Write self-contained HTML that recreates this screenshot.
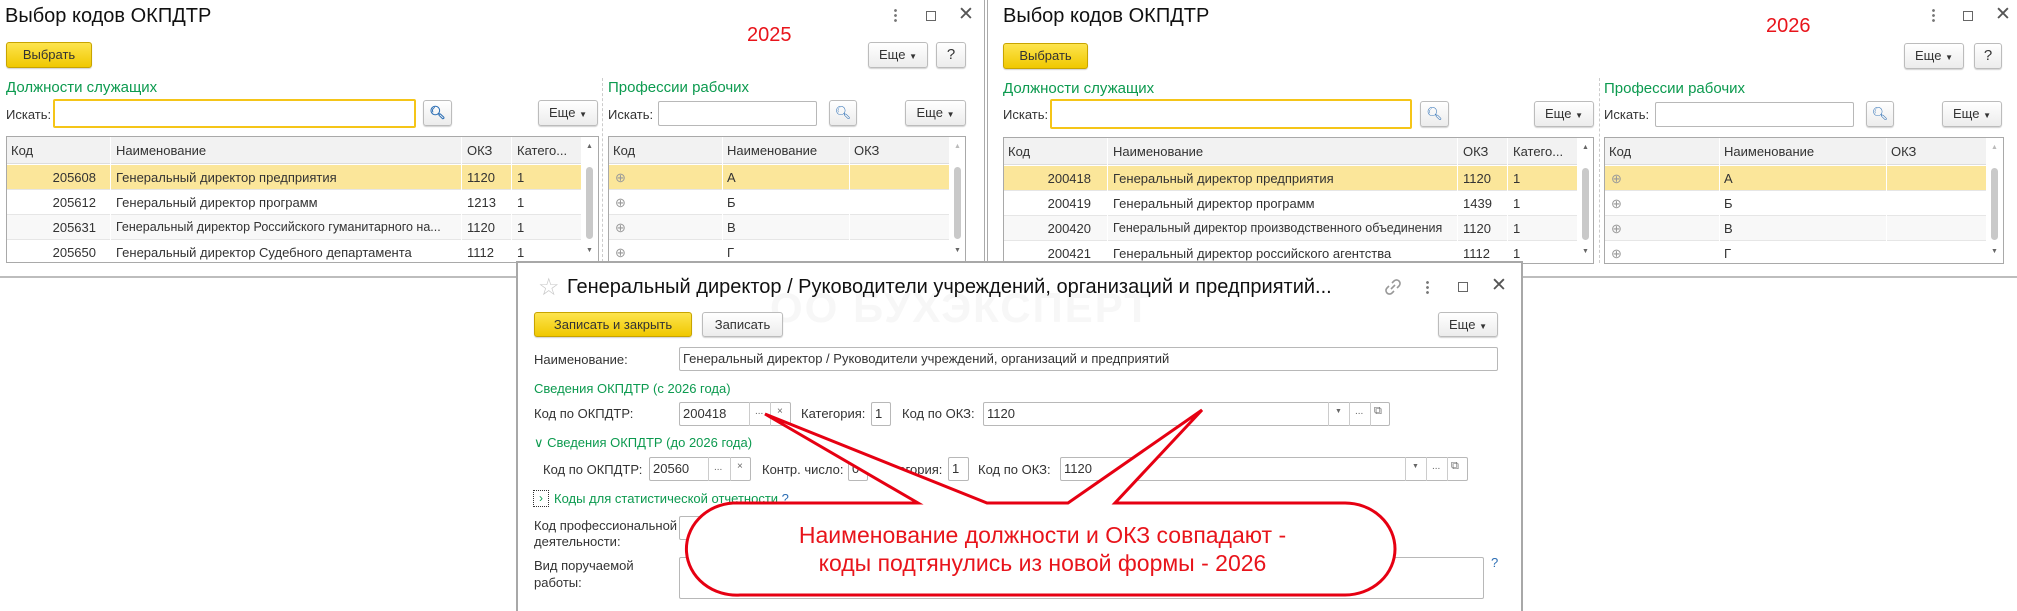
<!DOCTYPE html>
<html><head><meta charset="utf-8">
<style>
*{box-sizing:border-box;margin:0;padding:0}
body{width:2017px;height:607px;overflow:hidden;background:#fff;font-family:"Liberation Sans",Arial,sans-serif;font-size:13px;color:#333;position:relative}
.a{position:absolute;white-space:nowrap}
.ttl{font-size:20px;color:#111}
.grn{color:#0c9a4f;font-size:15px}
.red{color:#e8141b}
.btn{position:absolute;border:1px solid #bcbcbc;border-radius:3px;background:linear-gradient(#fff,#ececec);box-shadow:0 1px 1px rgba(0,0,0,.18);text-align:center;color:#333;font-size:13px}
.ylw{background:linear-gradient(#fde44e,#f0c800);border-color:#c8a400;color:#333}
.inp{position:absolute;border:1px solid #b8b8b8;border-radius:2px;background:#fff;padding-left:3px;font-size:13px;color:#333}
.tbl{position:absolute;border:1px solid #a9a9a9;overflow:hidden;background:#fff}
.hdr{position:absolute;top:0;left:0;right:0;height:27px;background:#f2f2f2;border-bottom:1px solid #ddd}
.row{position:absolute;left:0;height:25px;border-bottom:1px solid #e6e6e6}
.sel{background:#fbe69a}
.c{position:absolute;top:0;line-height:25px}
.vl{position:absolute;top:0;bottom:0;width:1px;background:#fff}
.sb{position:absolute;top:0;bottom:0;width:18px;background:#fff}
.thumb{position:absolute;left:5px;width:7px;background:#c9c9c9;border-radius:4px}
</style></head><body>

<!-- ========== WINDOW 1 ========== -->
<div class="a ttl" style="left:5px;top:5px">Выбор кодов ОКПДТР</div>
<div class="a" style="left:894px;top:8px;width:3px;height:14px;background:radial-gradient(circle,#777 1.2px,transparent 1.6px) 0 0/3px 5px"></div>
<div class="a" style="left:926px;top:11px;width:10px;height:10px;border:1px solid #666"></div>
<div class="a" style="left:958px;top:3px;font-size:19px;color:#555">✕</div>
<div class="a red" style="left:747px;top:24px;font-size:20px">2025</div>
<div class="btn ylw" style="left:6px;top:42px;width:86px;height:26px;line-height:24px">Выбрать</div>
<div class="btn" style="left:868px;top:42px;width:60px;height:26px;line-height:24px">Еще <span style="font-size:8px">▼</span></div>
<div class="btn" style="left:936px;top:42px;width:30px;height:26px;line-height:24px;font-size:15px">?</div>

<div class="a grn" style="left:6px;top:79px">Должности служащих</div>
<div class="a grn" style="left:608px;top:79px">Профессии рабочих</div>
<div class="a" style="left:602px;top:78px;height:184px;border-left:1px dashed #ccc"></div>

<div class="a" style="left:6px;top:107px">Искать:</div>
<div class="inp" style="left:53px;top:99px;width:363px;height:29px;border:2px solid #f5c518"></div>
<div class="btn" style="left:423px;top:100px;width:29px;height:26px;line-height:24px;color:#2d6fb5;font-weight:bold">&#x1F50D;&#xFE0E;</div>
<div class="btn" style="left:538px;top:100px;width:60px;height:26px;line-height:24px">Еще <span style="font-size:8px">▼</span></div>
<div class="a" style="left:608px;top:107px">Искать:</div>
<div class="inp" style="left:658px;top:101px;width:159px;height:25px"></div>
<div class="btn" style="left:829px;top:100px;width:28px;height:26px;line-height:24px;color:#2d6fb5">&#x1F50D;&#xFE0E;</div>
<div class="btn" style="left:905px;top:100px;width:61px;height:26px;line-height:24px">Еще <span style="font-size:8px">▼</span></div>

<div class="tbl" style="left:6px;top:136px;width:593px;height:127px">
 <div class="hdr"><div class="c" style="left:4px;line-height:27px">Код</div><div class="c" style="left:109px;line-height:27px">Наименование</div><div class="c" style="left:460px;line-height:27px">ОКЗ</div><div class="c" style="left:510px;line-height:27px">Катего...</div></div>
 <div class="row sel" style="top:28px;width:574px"></div>
 <div class="row" style="top:53px;width:574px"></div>
 <div class="row" style="top:78px;width:574px;background:#f8f8f8"></div>
 <div class="row" style="top:103px;width:574px"></div>
 <div class="vl" style="left:103px"></div><div class="vl" style="left:454px"></div><div class="vl" style="left:504px"></div>
 <div class="c" style="top:28px;right:502px">205608</div><div class="c" style="top:28px;left:109px">Генеральный директор предприятия</div><div class="c" style="top:28px;left:460px">1120</div><div class="c" style="top:28px;left:510px">1</div>
 <div class="c" style="top:53px;right:502px">205612</div><div class="c" style="top:53px;left:109px">Генеральный директор программ</div><div class="c" style="top:53px;left:460px">1213</div><div class="c" style="top:53px;left:510px">1</div>
 <div class="c" style="top:78px;right:502px">205631</div><div class="c" style="top:78px;left:109px;font-size:12.5px">Генеральный директор Российского гуманитарного на...</div><div class="c" style="top:78px;left:460px">1120</div><div class="c" style="top:78px;left:510px">1</div>
 <div class="c" style="top:103px;right:502px">205650</div><div class="c" style="top:103px;left:109px">Генеральный директор Судебного департамента</div><div class="c" style="top:103px;left:460px">1112</div><div class="c" style="top:103px;left:510px">1</div>
 <div class="sb" style="left:574px"><div class="a" style="left:5px;top:6px;font-size:7px;color:#666">▲</div><div class="thumb" style="top:30px;height:72px"></div><div class="a" style="left:5px;top:110px;font-size:7px;color:#666">▼</div></div>
</div>

<div class="tbl" style="left:608px;top:136px;width:358px;height:127px">
 <div class="hdr"><div class="c" style="left:4px;line-height:27px">Код</div><div class="c" style="left:118px;line-height:27px">Наименование</div><div class="c" style="left:245px;line-height:27px">ОКЗ</div></div>
 <div class="row sel" style="top:28px;width:340px"></div>
 <div class="row" style="top:53px;width:340px"></div>
 <div class="row" style="top:78px;width:340px;background:#f8f8f8"></div>
 <div class="row" style="top:103px;width:340px"></div>
 <div class="vl" style="left:113px"></div><div class="vl" style="left:240px"></div>
 <div class="c" style="top:28px;left:6px;color:#999">⊕</div><div class="c" style="top:28px;left:118px">А</div>
 <div class="c" style="top:53px;left:6px;color:#999">⊕</div><div class="c" style="top:53px;left:118px">Б</div>
 <div class="c" style="top:78px;left:6px;color:#999">⊕</div><div class="c" style="top:78px;left:118px">В</div>
 <div class="c" style="top:103px;left:6px;color:#999">⊕</div><div class="c" style="top:103px;left:118px">Г</div>
 <div class="sb" style="left:340px"><div class="a" style="left:5px;top:6px;font-size:7px;color:#bbb">▲</div><div class="thumb" style="top:30px;height:72px"></div><div class="a" style="left:5px;top:110px;font-size:7px;color:#666">▼</div></div>
</div>
<div class="a" style="left:0;top:276px;width:988px;height:2px;background:#bdbdbd"></div>
<div class="a" style="left:984px;top:0;width:1px;height:278px;background:#aaa"></div>
<div class="a" style="left:987px;top:0;width:1px;height:278px;background:#aaa"></div>

<!-- ========== WINDOW 2 ========== -->
<div class="a ttl" style="left:1003px;top:5px">Выбор кодов ОКПДТР</div>
<div class="a" style="left:1932px;top:8px;width:3px;height:14px;background:radial-gradient(circle,#777 1.2px,transparent 1.6px) 0 0/3px 5px"></div>
<div class="a" style="left:1963px;top:11px;width:10px;height:10px;border:1px solid #666"></div>
<div class="a" style="left:1995px;top:3px;font-size:19px;color:#555">✕</div>
<div class="a red" style="left:1766px;top:15px;font-size:20px">2026</div>
<div class="btn ylw" style="left:1003px;top:43px;width:85px;height:26px;line-height:24px">Выбрать</div>
<div class="btn" style="left:1904px;top:43px;width:60px;height:26px;line-height:24px">Еще <span style="font-size:8px">▼</span></div>
<div class="btn" style="left:1974px;top:43px;width:28px;height:26px;line-height:24px;font-size:15px">?</div>

<div class="a grn" style="left:1003px;top:80px">Должности служащих</div>
<div class="a grn" style="left:1604px;top:80px">Профессии рабочих</div>
<div class="a" style="left:1599px;top:78px;height:185px;border-left:1px dashed #ccc"></div>

<div class="a" style="left:1003px;top:107px">Искать:</div>
<div class="inp" style="left:1050px;top:99px;width:362px;height:30px;border:2px solid #f5c518"></div>
<div class="btn" style="left:1420px;top:101px;width:29px;height:26px;line-height:24px;color:#2d6fb5">&#x1F50D;&#xFE0E;</div>
<div class="btn" style="left:1534px;top:101px;width:60px;height:26px;line-height:24px">Еще <span style="font-size:8px">▼</span></div>
<div class="a" style="left:1604px;top:107px">Искать:</div>
<div class="inp" style="left:1655px;top:102px;width:199px;height:25px"></div>
<div class="btn" style="left:1866px;top:101px;width:28px;height:26px;line-height:24px;color:#2d6fb5">&#x1F50D;&#xFE0E;</div>
<div class="btn" style="left:1942px;top:101px;width:60px;height:26px;line-height:24px">Еще <span style="font-size:8px">▼</span></div>

<div class="tbl" style="left:1003px;top:137px;width:591px;height:127px">
 <div class="hdr"><div class="c" style="left:4px;line-height:27px">Код</div><div class="c" style="left:109px;line-height:27px">Наименование</div><div class="c" style="left:459px;line-height:27px">ОКЗ</div><div class="c" style="left:509px;line-height:27px">Катего...</div></div>
 <div class="row sel" style="top:28px;width:573px"></div>
 <div class="row" style="top:53px;width:573px"></div>
 <div class="row" style="top:78px;width:573px;background:#f8f8f8"></div>
 <div class="row" style="top:103px;width:573px"></div>
 <div class="vl" style="left:103px"></div><div class="vl" style="left:453px"></div><div class="vl" style="left:503px"></div>
 <div class="c" style="top:28px;right:502px">200418</div><div class="c" style="top:28px;left:109px">Генеральный директор предприятия</div><div class="c" style="top:28px;left:459px">1120</div><div class="c" style="top:28px;left:509px">1</div>
 <div class="c" style="top:53px;right:502px">200419</div><div class="c" style="top:53px;left:109px">Генеральный директор программ</div><div class="c" style="top:53px;left:459px">1439</div><div class="c" style="top:53px;left:509px">1</div>
 <div class="c" style="top:78px;right:502px">200420</div><div class="c" style="top:78px;left:109px;font-size:12.5px">Генеральный директор производственного объединения</div><div class="c" style="top:78px;left:459px">1120</div><div class="c" style="top:78px;left:509px">1</div>
 <div class="c" style="top:103px;right:502px">200421</div><div class="c" style="top:103px;left:109px">Генеральный директор российского агентства</div><div class="c" style="top:103px;left:459px">1112</div><div class="c" style="top:103px;left:509px">1</div>
 <div class="sb" style="left:573px"><div class="a" style="left:5px;top:6px;font-size:7px;color:#666">▲</div><div class="thumb" style="top:30px;height:72px"></div><div class="a" style="left:5px;top:110px;font-size:7px;color:#666">▼</div></div>
</div>

<div class="tbl" style="left:1604px;top:137px;width:400px;height:127px">
 <div class="hdr"><div class="c" style="left:4px;line-height:27px">Код</div><div class="c" style="left:119px;line-height:27px">Наименование</div><div class="c" style="left:286px;line-height:27px">ОКЗ</div></div>
 <div class="row sel" style="top:28px;width:381px"></div>
 <div class="row" style="top:53px;width:381px"></div>
 <div class="row" style="top:78px;width:381px;background:#f8f8f8"></div>
 <div class="row" style="top:103px;width:381px"></div>
 <div class="vl" style="left:114px"></div><div class="vl" style="left:281px"></div>
 <div class="c" style="top:28px;left:6px;color:#999">⊕</div><div class="c" style="top:28px;left:119px">А</div>
 <div class="c" style="top:53px;left:6px;color:#999">⊕</div><div class="c" style="top:53px;left:119px">Б</div>
 <div class="c" style="top:78px;left:6px;color:#999">⊕</div><div class="c" style="top:78px;left:119px">В</div>
 <div class="c" style="top:103px;left:6px;color:#999">⊕</div><div class="c" style="top:103px;left:119px">Г</div>
 <div class="sb" style="left:381px"><div class="a" style="left:5px;top:6px;font-size:7px;color:#bbb">▲</div><div class="thumb" style="top:30px;height:72px"></div><div class="a" style="left:5px;top:110px;font-size:7px;color:#666">▼</div></div>
</div>
<div class="a" style="left:1522px;top:276px;width:495px;height:2px;background:#bdbdbd"></div>

<!-- ========== DIALOG ========== -->
<div class="a" style="left:516px;top:261px;width:1007px;height:350px;border:2px solid #a8a8a8;border-bottom:none;background:#fff"></div>
<div class="a" style="left:770px;top:284px;font-size:42px;font-weight:bold;color:#f7f7f7;letter-spacing:2px">ОО БУХЭКСПЕРТ</div>
<div class="a" style="left:538px;top:273px;font-size:24px;color:#c8c8c8">☆</div>
<div class="a ttl" style="left:567px;top:276px">Генеральный директор / Руководители учреждений, организаций и предприятий...</div>
<svg class="a" style="left:1384px;top:278px" width="18" height="18" viewBox="0 0 18 18"><g fill="none" stroke="#999" stroke-width="1.6"><path d="M7 11 L11 7"/><path d="M8 5 L10 3 A3 3 0 0 1 15 8 L13 10"/><path d="M10 13 L8 15 A3 3 0 0 1 3 10 L5 8"/></g></svg>
<div class="a" style="left:1426px;top:280px;width:3px;height:14px;background:radial-gradient(circle,#777 1.2px,transparent 1.6px) 0 0/3px 5px"></div>
<div class="a" style="left:1458px;top:282px;width:10px;height:10px;border:1px solid #666"></div>
<div class="a" style="left:1491px;top:274px;font-size:19px;color:#555">✕</div>

<div class="btn ylw" style="left:534px;top:312px;width:158px;height:25px;line-height:23px">Записать и закрыть</div>
<div class="btn" style="left:702px;top:312px;width:81px;height:25px;line-height:23px">Записать</div>
<div class="btn" style="left:1438px;top:312px;width:60px;height:25px;line-height:23px">Еще <span style="font-size:8px">▼</span></div>

<div class="a" style="left:534px;top:352px">Наименование:</div>
<div class="inp" style="left:679px;top:347px;width:819px;height:24px;line-height:22px">Генеральный директор / Руководители учреждений, организаций и предприятий</div>

<div class="a grn" style="left:534px;top:381px;font-size:13px">Сведения ОКПДТР (с 2026 года)</div>
<div class="a" style="left:534px;top:406px">Код по ОКПДТР:</div>
<div class="inp" style="left:679px;top:402px;width:112px;height:24px;line-height:22px">200418</div>
<div class="a" style="left:749px;top:402px;width:1px;height:24px;background:#ccc"></div><div class="a" style="left:770px;top:402px;width:1px;height:24px;background:#ccc"></div>
<div class="a" style="left:755px;top:406px;font-size:10px;color:#666">...</div><div class="a" style="left:777px;top:406px;font-size:10px;color:#666">×</div>
<div class="a" style="left:801px;top:406px">Категория:</div>
<div class="inp" style="left:871px;top:402px;width:20px;height:24px;line-height:22px">1</div>
<div class="a" style="left:902px;top:406px">Код по ОКЗ:</div>
<div class="inp" style="left:983px;top:402px;width:407px;height:24px;line-height:22px">1120</div>
<div class="a" style="left:1328px;top:402px;width:1px;height:24px;background:#ccc"></div><div class="a" style="left:1349px;top:402px;width:1px;height:24px;background:#ccc"></div><div class="a" style="left:1370px;top:402px;width:1px;height:24px;background:#ccc"></div>
<div class="a" style="left:1335px;top:408px;font-size:7px;color:#666">▼</div><div class="a" style="left:1355px;top:406px;font-size:10px;color:#666">...</div><div class="a" style="left:1374px;top:405px;font-size:11px;color:#666">⧉</div>

<div class="a grn" style="left:534px;top:435px;font-size:13px">∨ Сведения ОКПДТР (до 2026 года)</div>
<div class="a" style="left:543px;top:462px">Код по ОКПДТР:</div>
<div class="inp" style="left:649px;top:457px;width:102px;height:24px;line-height:22px">20560</div>
<div class="a" style="left:708px;top:457px;width:1px;height:24px;background:#ccc"></div><div class="a" style="left:730px;top:457px;width:1px;height:24px;background:#ccc"></div>
<div class="a" style="left:714px;top:462px;font-size:10px;color:#666">...</div><div class="a" style="left:737px;top:461px;font-size:10px;color:#666">×</div>
<div class="a" style="left:762px;top:462px">Контр. число:</div>
<div class="inp" style="left:848px;top:457px;width:20px;height:24px;line-height:22px">0</div>
<div class="a" style="left:878px;top:462px">Категория:</div>
<div class="inp" style="left:948px;top:457px;width:21px;height:24px;line-height:22px">1</div>
<div class="a" style="left:978px;top:462px">Код по ОКЗ:</div>
<div class="inp" style="left:1060px;top:457px;width:408px;height:24px;line-height:22px">1120</div>
<div class="a" style="left:1405px;top:457px;width:1px;height:24px;background:#ccc"></div><div class="a" style="left:1426px;top:457px;width:1px;height:24px;background:#ccc"></div><div class="a" style="left:1447px;top:457px;width:1px;height:24px;background:#ccc"></div>
<div class="a" style="left:1412px;top:463px;font-size:7px;color:#666">▼</div><div class="a" style="left:1432px;top:461px;font-size:10px;color:#666">...</div><div class="a" style="left:1451px;top:460px;font-size:11px;color:#666">⧉</div>

<div class="a" style="left:533px;top:490px;width:16px;height:17px;border:1px dotted #333;font-size:12px;color:#0c9a4f;text-align:center;line-height:15px">›</div>
<div class="a grn" style="left:554px;top:491px;font-size:13px">Коды для статистической отчетности <span style="color:#2d6fb5">?</span></div>

<div class="a" style="left:534px;top:518px">Код профессиональной</div>
<div class="a" style="left:534px;top:534px">деятельности:</div>
<div class="inp" style="left:679px;top:516px;width:40px;height:24px"></div>
<div class="a" style="left:534px;top:558px">Вид поручаемой</div>
<div class="a" style="left:534px;top:575px">работы:</div>
<div class="inp" style="left:679px;top:557px;width:805px;height:42px"></div>
<div class="a" style="left:1491px;top:555px;color:#2d6fb5">?</div>

<!-- callout -->
<svg class="a" style="left:0;top:0" width="2017" height="607">
<path d="M733 503 L918 503 L765 414 L987 503 L1068 503 L1202 410 L1115 503 L1345 503 A50 46 0 0 1 1345 595 L740 595 A50 46 0 0 1 733 503 Z" fill="#fff" stroke="#e60012" stroke-width="3" stroke-linejoin="miter"/>
</svg>
<div class="a red" style="left:690px;top:521px;width:705px;text-align:center;font-size:23px;line-height:28px">Наименование должности и ОКЗ совпадают -<br>коды подтянулись из новой формы - 2026</div>
</body></html>
